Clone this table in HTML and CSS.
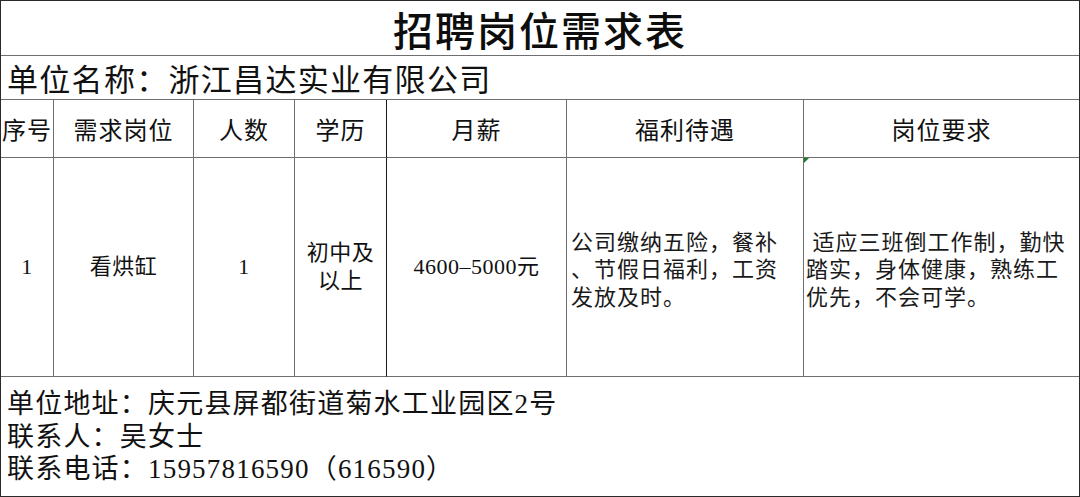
FILE: index.html
```html
<!DOCTYPE html>
<html lang="zh-CN">
<head>
<meta charset="utf-8">
<title>招聘岗位需求表</title>
<link rel="stylesheet" href="styles.css">
</head>
<body>
<div class="sheet">
  <div class="cell title span-all">招聘岗位需求表</div>
  <div class="cell company span-all">单位名称：浙江昌达实业有限公司</div>

  <div class="cell head">序号</div>
  <div class="cell head">需求岗位</div>
  <div class="cell head">人数</div>
  <div class="cell head dark-r">学历</div>
  <div class="cell head">月薪</div>
  <div class="cell head">福利待遇</div>
  <div class="cell head last">岗位要求</div>

  <div class="cell data">1</div>
  <div class="cell data">看烘缸</div>
  <div class="cell data">1</div>
  <div class="cell data dark-r">初中及<br>以上</div>
  <div class="cell data">4600–5000元</div>
  <div class="cell data text">公司缴纳五险，餐补<br>、节假日福利，工资<br>发放及时。</div>
  <div class="cell data text req last">&nbsp;适应三班倒工作制，勤快<br>踏实，身体健康，熟练工<br>优先，不会可学。</div>

  <div class="cell footer span-all">
    <div>单位地址：庆元县屏都街道菊水工业园区2号</div>
    <div>联系人：吴女士</div>
    <div>联系电话：15957816590（616590）</div>
  </div>
</div>
</body>
</html>
```
FILE: styles.css
```css
html, body {
  margin: 0;
  padding: 0;
  background: #fff;
}
body {
  width: 1080px;
  height: 497px;
  overflow: hidden;
  font-family: "Liberation Serif", "Noto Sans CJK SC", serif;
  color: #111;
}
.sheet {
  box-sizing: border-box;
  width: 1080px;
  height: 497px;
  border: 1px solid #2a2a2a;
  display: grid;
  grid-template-columns: 53px 140px 101px 92px 180px 237px 1fr;
  grid-template-rows: 55px 44px 58px 219px 1fr;
}
.cell {
  box-sizing: border-box;
  border-right: 1px solid #6f6f6f;
  border-bottom: 1px solid #6f6f6f;
  display: flex;
  align-items: center;
  justify-content: center;
  text-align: center;
  position: relative;
}
.span-all {
  grid-column: 1 / -1;
  border-right: none;
}
.last {
  border-right: none;
}
.dark-r {
  border-right-color: #1a1a1a;
}
.title {
  font-size: 40px;
  letter-spacing: 2px;
  font-weight: 500;
  color: #0d0d0d;
  padding-top: 2px;
}
.company {
  justify-content: flex-start;
  padding-left: 6px;
  font-size: 31px;
  letter-spacing: 1.3px;
  font-weight: 400;
}
.head {
  font-size: 24px;
  letter-spacing: 1px;
}
.data {
  font-size: 22px;
  line-height: 28px;
  letter-spacing: 0.5px;
}
.num {
  font-size: 23px;
}
.text {
  justify-content: flex-start;
  text-align: left;
  padding-left: 4px;
  padding-top: 6px;
  font-size: 22px;
  line-height: 27.5px;
  letter-spacing: 1px;
  color: #1a1a1a;
}
.req {
  padding-left: 2px;
}
.req::before {
  content: "";
  position: absolute;
  left: 0;
  top: 0;
  width: 0;
  height: 0;
  border-top: 5px solid #1e7a2a;
  border-right: 5px solid transparent;
}
.footer {
  border-bottom: none;
  flex-direction: column;
  align-items: flex-start;
  justify-content: flex-start;
  text-align: left;
  padding-left: 6px;
  padding-top: 11px;
  font-size: 27px;
  line-height: 32.5px;
  letter-spacing: 1.2px;
  font-weight: 400;
}
```
